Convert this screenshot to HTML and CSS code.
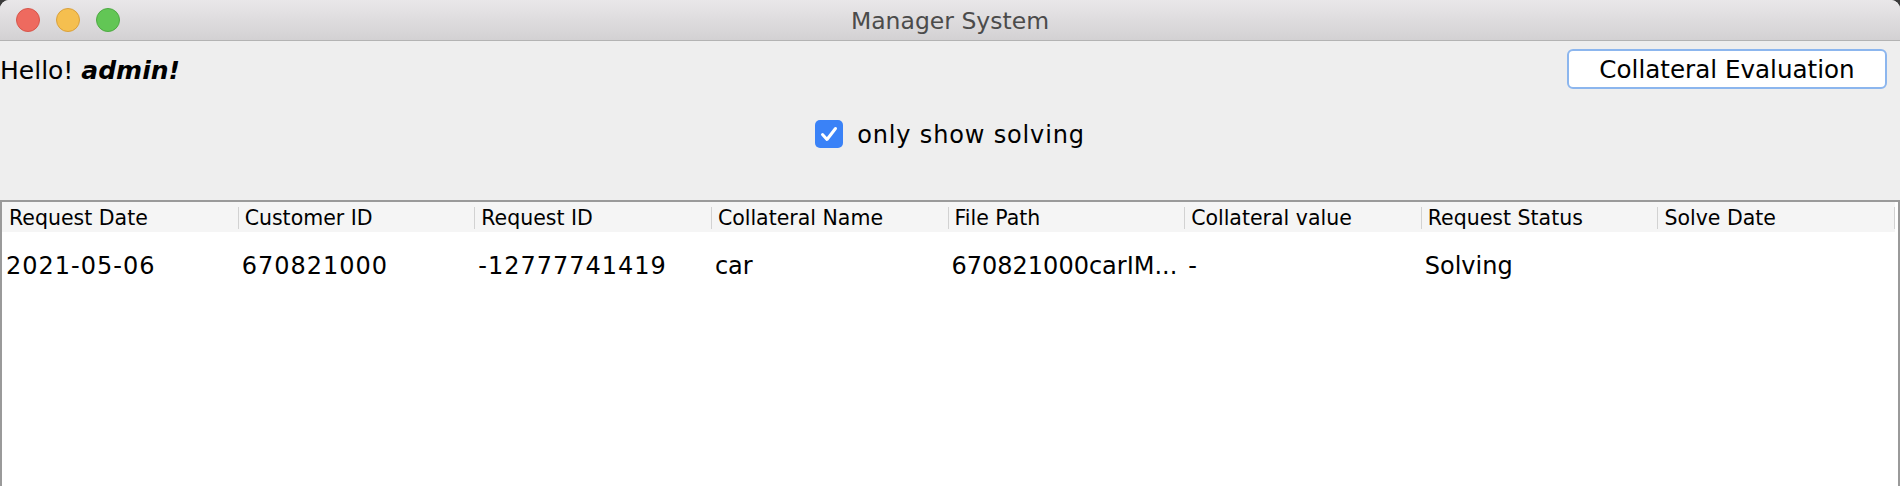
FILE: index.html
```html
<!DOCTYPE html>
<html>
<head>
<meta charset="utf-8">
<title>Manager System</title>
<link rel="stylesheet" href="styles.css">
</head>
<body>
<div class="window">
  <div class="titlebar">
    <div class="lights">
      <span class="light red"></span>
      <span class="light yellow"></span>
      <span class="light green"></span>
    </div>
    <div class="title">Manager System</div>
    <div></div>
  </div>
  <div class="content">
    <div class="toprow">
      <div class="hello">Hello! <b><i>admin!</i></b></div>
      <button class="btn">Collateral Evaluation</button>
    </div>
    <div class="filter">
      <span class="checkbox">
        <svg width="28" height="28" viewBox="0 0 28 28"><polyline points="7.5,14.5 12,19.5 20.5,8.5" fill="none" stroke="#fff" stroke-width="3" stroke-linecap="round" stroke-linejoin="round"/></svg>
      </span>
      <span class="label">only show solving</span>
    </div>
    <div class="table">
      <div class="row head">
        <div class="cell first">Request Date</div>
        <div class="cell">Customer ID</div>
        <div class="cell">Request ID</div>
        <div class="cell">Collateral Name</div>
        <div class="cell">File Path</div>
        <div class="cell">Collateral value</div>
        <div class="cell">Request Status</div>
        <div class="cell">Solve Date</div>
      </div>
      <div class="row data">
        <div class="cell first num">2021-05-06</div>
        <div class="cell num">670821000</div>
        <div class="cell num">-12777741419</div>
        <div class="cell">car</div>
        <div class="cell">670821000carIM...</div>
        <div class="cell">-</div>
        <div class="cell">Solving</div>
        <div class="cell"></div>
      </div>
    </div>
  </div>
</div>
</body>
</html>
```

FILE: styles.css
```css
html, body {
  margin: 0;
  padding: 0;
  background: #3a3a3a;
}
.window {
  width: 1900px;
  height: 486px;
  overflow: hidden;
  display: flex;
  flex-direction: column;
  border-radius: 9px 9px 0 0;
  background: #eeeeee;
  font-family: "DejaVu Sans", "Liberation Sans", sans-serif;
  color: #000;
}
.titlebar {
  height: 40px;
  flex: none;
  border-bottom: 1px solid #b3b3b3;
  background: linear-gradient(#e9e7e9, #d3d1d3);
  display: grid;
  grid-template-columns: 1fr auto 1fr;
  align-items: center;
}
.lights {
  display: flex;
  gap: 16px;
  padding-left: 16px;
}
.light {
  width: 22px;
  height: 22px;
  border-radius: 50%;
  border: 1px solid;
}
.red { background: #ee6a5f; border-color: #d6564b; }
.yellow { background: #f5bf4f; border-color: #d9a03c; }
.green { background: #62c655; border-color: #4ea943; }
.title {
  font-size: 23.5px;
  color: #4b4b4b;
  padding-top: 1px;
}
.content {
  flex: 1;
  display: flex;
  flex-direction: column;
  min-height: 0;
}
.toprow {
  display: flex;
  justify-content: space-between;
  align-items: center;
  padding: 8px 13px 0 0;
}
.hello {
  font-size: 25px;
  padding-top: 2px;
}
.btn {
  width: 320px;
  height: 40px;
  box-sizing: border-box;
  background: #fff;
  border: 2px solid #8cb6ee;
  border-radius: 6px;
  font-family: "DejaVu Sans", "Liberation Sans", sans-serif;
  font-size: 24.6px;
  color: #000;
  padding: 0;
}
.filter {
  margin-top: 31px;
  display: flex;
  justify-content: center;
  align-items: center;
  gap: 14px;
  height: 28px;
}
.checkbox {
  width: 28px;
  height: 28px;
  border-radius: 5px;
  background: #3a82f7;
  display: block;
}
.checkbox svg { display: block; }
.label {
  font-size: 24px;
  letter-spacing: 0.85px;
  padding-top: 2px;
}
.table {
  margin-top: 52px;
  flex: 1;
  background: #fff;
  border: 2px solid #9a9a9a;
  border-bottom: none;
}
.row {
  display: grid;
  grid-template-columns: repeat(8, 1fr);
  margin-right: 3px;
}
.head {
  height: 30px;
  box-sizing: border-box;
  background: #f5f5f5;
  font-size: 20.5px;
}
.head .cell {
  padding: 3px 0 0 6px;
  line-height: 27px;
  background: linear-gradient(#d2d2d2, #d2d2d2) no-repeat right 0 top 5px / 1px 22px;
}
.head .cell.first { padding-left: 7px; }
.cell {
  white-space: nowrap;
}
.data {
  padding-top: 19px;
  font-size: 24px;
  line-height: 30px;
}
.data .cell { padding-left: 3px; }
.data .cell.first { padding-left: 4px; }
.data .cell.num { letter-spacing: 1px; }
```
